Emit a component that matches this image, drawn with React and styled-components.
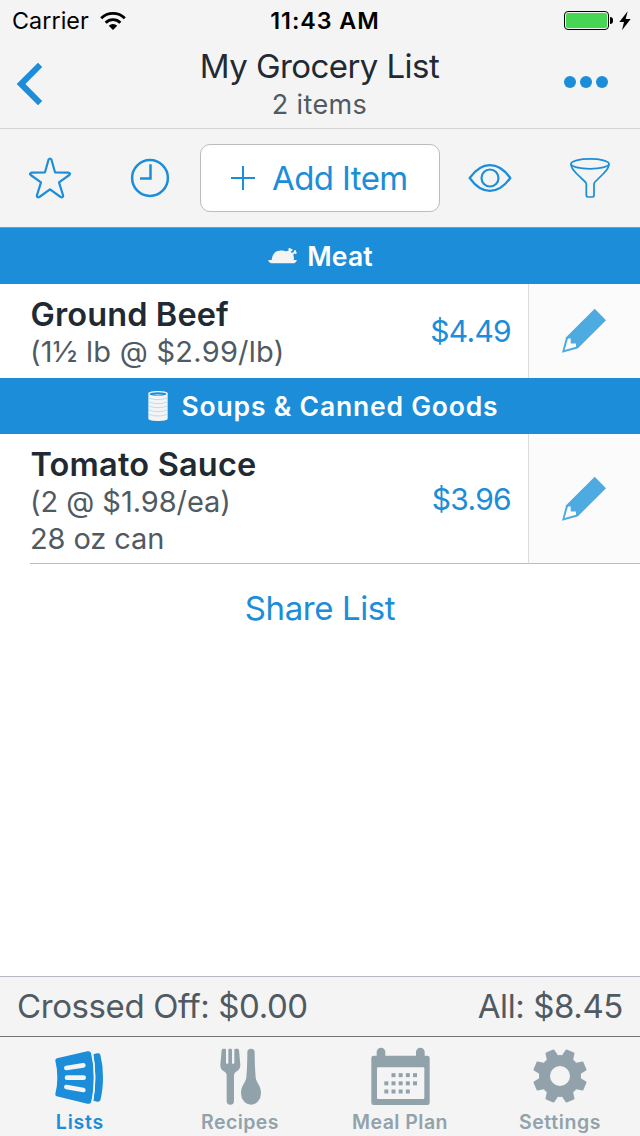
import React from "react"
import styled, { createGlobalStyle } from "styled-components"

const blue = "#1b8dd9"
const dark = "#1f2a33"
const grey = "#505a62"
const tabGrey = "#92a2ab"
const barBg = "#f4f4f4"

const sections = [
	{
		name: "Meat",
		icon: "meat",
		spacing: 0.14,
		items: [
			{
				name: "Ground Beef",
				nameSpacing: 0.11,
				details: [{ text: "(1½ lb @ $2.99/lb)", spacing: 0.25 }],
				price: "$4.49",
			},
		],
	},
	{
		name: "Soups & Canned Goods",
		icon: "can",
		spacing: 0.8,
		items: [
			{
				name: "Tomato Sauce",
				nameSpacing: 0.2,
				details: [
					{ text: "(2 @ $1.98/ea)", spacing: -0.05 },
					{ text: "28 oz can", spacing: -0.1 },
				],
				price: "$3.96",
			},
		],
	},
]

const WifiIcon = () => (
	<svg width="26" height="20" viewBox="299 30 78 60">
		<g fill="none" stroke="#000" strokeWidth="8.5">
			<path d="M302.6 51.6A50 50 0 0 1 373.4 51.6" />
			<path d="M316 65A31 31 0 0 1 360 65" />
		</g>
		<path d="M325.3 74.3A18 18 0 0 1 350.7 74.3L338 87Z" />
	</svg>
)

const BoltIcon = () => (
	<svg width="12" height="20" viewBox="895 30 36 60">
		<path d="M921 31L896 63H910L904 88L930 54H915Z" />
	</svg>
)

const BackIcon = () => (
	<svg width="28" height="44" viewBox="0 0 28 44">
		<path d="M0.7 22L22 0.7L26.2 5L9.4 22L26.2 39L22 43.3Z" fill={blue} />
	</svg>
)

const StarIcon = () => (
	<svg width="44" height="44" viewBox="84 78 132 132">
		<path
			d="M145.500 89Q150 82 154.500 89L165 127L206 128Q213 130 208 135L177 157L189.500 197Q189 204 182 201L150 178L118 201Q111 204 110.500 197L123 157L92 135Q87 130 94 128L135 127Z"
			fill="none"
			stroke={blue}
			strokeWidth="6.500"
			strokeLinejoin="round"
		/>
	</svg>
)

const ClockIcon = () => (
	<svg width="40" height="40" viewBox="0 0 40 40">
		<g fill="none" stroke={blue} strokeWidth="2.500">
			<circle cx="20" cy="20" r="17.900" />
			<path d="M20.500 6.200V20.500H10" />
		</g>
	</svg>
)

const PlusIcon = () => (
	<svg width="24" height="24" viewBox="0 0 24 24">
		<path d="M12 0V24M0 12H24" stroke={blue} strokeWidth="2" />
	</svg>
)

const EyeIcon = () => (
	<svg width="44" height="30" viewBox="444 99 132 90">
		<g fill="none" stroke={blue} strokeWidth="6.500" strokeLinejoin="round">
			<path d="M449 144C469 116 490 105.500 510 105.500S551 116 571 144C551 172 530 182.500 510 182.500S469 172 449 144Z" />
			<circle cx="510" cy="144" r="25.500" />
		</g>
	</svg>
)

const FunnelIcon = () => (
	<svg width="42" height="42" viewBox="747 81 126 126">
		<g fill="none" stroke={blue} strokeWidth="5.200">
			<ellipse cx="810" cy="101.500" rx="57" ry="15" />
			<path d="M753 102C753 115 761 122 771 132L796 156Q799 159 799 163V196Q799 201 804 201H817Q822 201 822 196V163Q822 159 825 156L849 132C859 122 867 115 867 102" />
		</g>
	</svg>
)

const MeatIcon = () => (
	<svg width="30" height="18" viewBox="803 351 90 54">
		<path
			d="M803 391Q808 389 814 390C816 372 825 362 838 362C848 361 856 366 861 363L866 361Q862 356 866 354Q870 353 872 357Q877 356 877 360Q876 364 871 364L874 369L880 366Q880 360 885 360Q888 361 887 365Q891 367 888 371Q884 373 881 370L879 376Q882 384 880 390H890Q887 398 882 400H812Q806 399 803 391Z"
			fill="#f4f4f4"
		/>
	</svg>
)

const CanIcon = () => (
	<svg width="30" height="30" viewBox="430 321 90 90">
		<path
			d="M446 328C446 319 504 319 504 328V404C504 413 446 413 446 404Z"
			fill="#f4f4f4"
		/>
		<ellipse cx="475" cy="330" rx="25" ry="5.500" fill={blue} />
		<path d="M459 333Q475 327 491 333Q475 338 459 333Z" fill="#8cc5ea" />
		<g fill="none" stroke="#a5d0ec" strokeWidth="2">
			<path d="M447 342Q475 352 503 342" />
			<path d="M447 354Q475 364 503 354" />
			<path d="M447 366Q475 376 503 366" />
			<path d="M447 378Q475 388 503 378" />
			<path d="M447 391Q475 401 503 391" />
		</g>
	</svg>
)

const PencilIcon = () => (
	<svg width="46" height="46" viewBox="0 0 46 46">
		<path
			d="M32.700 0.800L44 12.200L15.700 40.500L0 44.800L4.100 29.300Z"
			fill="#4dabe1"
		/>
		<path d="M6 30.500H8.700V35.500H14V38.800L2.600 42Z" fill="#fbfbfb" />
	</svg>
)

const ListsIcon = () => (
	<svg width="50" height="60" viewBox="165 231 150 180">
		<g fill={blue}>
			<path d="M166 272Q165 267 171 265L262 244Q271 242 273 249Q282 285 281 323Q281 365 273 397Q271 403 262 401L170 379Q165 378 166 372Q172 350 172 323Q172 295 166 272Z" />
			<path d="M280 253L292 250Q299 249 301 254Q309 285 309 322Q309 360 301 391Q299 396 292 395L280 392Q286 360 286 322Q286 285 280 253Z" />
		</g>
		<path
			d="M277 247Q284 285 284 322Q284 362 277 398"
			fill="none"
			stroke={barBg}
			strokeWidth="4"
		/>
		<path
			d="M199 294L250 286M201 323H251M199 351L250 360"
			stroke={barBg}
			strokeWidth="14"
			strokeLinecap="round"
		/>
	</svg>
)

const RecipesIcon = () => (
	<svg width="44" height="60" viewBox="654 231 132 180">
		<g fill={tabGrey}>
			<path d="M665 240Q666 236 670 236H675Q678 236 678 240V278A3.500 3.500 0 0 0 685 278V240Q685 236 688 236H693Q696 236 696 240V278A3.500 3.500 0 0 0 703 278V240Q703 236 706 236H712Q716 236 717 240L721 284C721 297 714 302 708 305Q702 308 702 316V393A11 11 0 0 1 680 393V316Q680 308 674 305C667 302 661 297 661 284Z" />
			<path d="M742 247A11 11 0 0 1 764 247C764 270 765 300 767 322C768 338 783 345 783 370A30 34 0 0 1 723 370C723 345 738 338 739 322C741 300 742 270 742 247Z" />
		</g>
	</svg>
)

const calendarDots = [
	[1, 2, 3, 4],
	[0, 1, 2, 3, 4],
	[0, 1, 2, 3],
]

const CalendarIcon = () => (
	<svg width="60" height="60" viewBox="151 231 180 180">
		<g fill={tabGrey}>
			<rect x="171" y="233" width="26" height="40" rx="13" />
			<rect x="289" y="233" width="26" height="40" rx="13" />
			<rect x="155" y="257" width="175" height="148" rx="7" />
		</g>
		<rect x="172" y="292" width="142" height="95" rx="3" fill={barBg} />
		{calendarDots.map((cols, row) =>
			cols.map((col) => (
				<rect
					key={`${row}-${col}`}
					x={194 + col * 21.5}
					y={309.5 + row * 24.5}
					width="12"
					height="12"
					fill={tabGrey}
				/>
			))
		)}
	</svg>
)

const GearIcon = () => (
	<svg width="60" height="60" viewBox="630 231 180 180">
		<g fill={tabGrey} stroke={tabGrey} strokeLinejoin="round">
			{[22.5, 67.5, 112.5, 157.5, 202.5, 247.5, 292.5, 337.5].map((a) => (
				<path
					key={a}
					d="M704 265L708.5 240H731.5L736 265Z"
					strokeWidth="6"
					transform={`rotate(${a} 720 318)`}
				/>
			))}
			<circle cx="720" cy="318" r="46.500" fill="none" strokeWidth="33" />
		</g>
	</svg>
)

const tabs = [
	{ label: "Lists", icon: <ListsIcon />, spacing: 0.8, active: true },
	{ label: "Recipes", icon: <RecipesIcon />, spacing: 0.45 },
	{ label: "Meal Plan", icon: <CalendarIcon />, spacing: 0.48 },
	{ label: "Settings", icon: <GearIcon />, spacing: 0.6 },
]

const ListItem = ({ item, last }) => (
	<Item>
		<ItemBody $last={last}>
			<ItemText $last={last}>
				<ItemName $spacing={item.nameSpacing}>{item.name}</ItemName>
				{item.details.map((d) => (
					<ItemDetail key={d.text} $spacing={d.spacing}>
						{d.text}
					</ItemDetail>
				))}
			</ItemText>
			<Price>{item.price}</Price>
		</ItemBody>
		<EditButton $last={last} aria-label={`Edit ${item.name}`}>
			<PencilIcon />
		</EditButton>
	</Item>
)

export default function App() {
	return (
		<>
			<GlobalStyle />
			<Screen>
				<StatusBar>
					<Carrier>
						Carrier
						<WifiIcon />
					</Carrier>
					<Time>11:43 AM</Time>
					<Battery>
						<BatteryCase>
							<BatteryLevel />
						</BatteryCase>
						<BatteryTip />
						<BoltIcon />
					</Battery>
				</StatusBar>
				<NavBar>
					<BackButton aria-label="Back">
						<BackIcon />
					</BackButton>
					<Heading>
						<Title>My Grocery List</Title>
						<Subtitle>2 items</Subtitle>
					</Heading>
					<MoreButton aria-label="More">
						<Dot />
						<Dot />
						<Dot />
					</MoreButton>
				</NavBar>
				<Toolbar>
					<ToolButton aria-label="Favorites">
						<StarIcon />
					</ToolButton>
					<ToolButton aria-label="Recent">
						<ClockIcon />
					</ToolButton>
					<AddButton>
						<PlusIcon />
						Add Item
					</AddButton>
					<ToolButton aria-label="Show">
						<EyeIcon />
					</ToolButton>
					<ToolButton aria-label="Filter">
						<FunnelIcon />
					</ToolButton>
				</Toolbar>
				<List>
					{sections.map((section, i) => (
						<React.Fragment key={section.name}>
							<SectionHeader $spacing={section.spacing}>
								{section.icon === "meat" ? <MeatIcon /> : <CanIcon />}
								{section.name}
							</SectionHeader>
							{section.items.map((item) => (
								<ListItem
									key={item.name}
									item={item}
									last={i === sections.length - 1}
								/>
							))}
						</React.Fragment>
					))}
					<ShareButton>Share List</ShareButton>
				</List>
				<Totals>
					<Total>Crossed Off: $0.00</Total>
					<Total>All: $8.45</Total>
				</Totals>
				<TabBar>
					{tabs.map((tab) => (
						<Tab key={tab.label} $active={tab.active} $spacing={tab.spacing}>
							{tab.icon}
							<TabLabel>{tab.label}</TabLabel>
						</Tab>
					))}
				</TabBar>
			</Screen>
		</>
	)
}

const GlobalStyle = createGlobalStyle`
	* {
		box-sizing: border-box;
	}
	body {
		margin: 0;
		font-family: Inter, "Liberation Sans", sans-serif;
	}
	button {
		padding: 0;
		border: 0;
		background: none;
		font: inherit;
	}
	svg {
		display: block;
		flex: none;
	}
`
const Screen = styled.div`
	display: flex;
	flex-direction: column;
	width: 640px;
	height: 1136px;
	background: #fff;
	color: ${dark};
	overflow: hidden;
`
const StatusBar = styled.div`
	display: grid;
	grid-template-columns: 200px 1fr 200px;
	align-items: center;
	flex: none;
	height: 40px;
	padding: 1px 9px 0 12px;
	background: ${barBg};
	color: #000;
	font-size: 23.3px;
`
const Carrier = styled.div`
	display: flex;
	align-items: center;
	gap: 11px;
	letter-spacing: 0.07px;
`
const Time = styled.div`
	padding-left: 7px;
	text-align: center;
	font-weight: 600;
	letter-spacing: 0.95px;
`
const Battery = styled.div`
	display: flex;
	align-items: center;
	justify-content: flex-end;
`
const BatteryCase = styled.div`
	width: 45px;
	height: 19px;
	padding: 1px;
	border: 1px solid #000;
	border-radius: 4px;
`
const BatteryLevel = styled.div`
	height: 100%;
	border-radius: 2px;
	background: #46d654;
`
const BatteryTip = styled.div`
	width: 3px;
	height: 7px;
	margin: 0 6px 0 1px;
	border-radius: 0 3px 3px 0;
	background: #000;
`
const NavBar = styled.header`
	display: grid;
	grid-template-columns: 100px 1fr 100px;
	flex: none;
	height: 89px;
	border-bottom: 1px solid #d5d5d5;
	background: ${barBg};
`
const BackButton = styled.button`
	display: flex;
	align-items: center;
	padding-left: 16px;
`
const Heading = styled.div`
	padding: 6px 1px 0 0;
	text-align: center;
`
const Title = styled.h1`
	margin: 0;
	font-size: 33px;
	font-weight: 400;
	line-height: 40px;
	letter-spacing: -0.57px;
`
const Subtitle = styled.p`
	margin: 0;
	color: ${grey};
	font-size: 27px;
	line-height: 38px;
	letter-spacing: 0.35px;
`
const MoreButton = styled.button`
	display: flex;
	align-items: center;
	justify-content: flex-end;
	gap: 4px;
	padding: 0 32px 4px 0;
`
const Dot = styled.span`
	width: 12px;
	height: 12px;
	border-radius: 50%;
	background: ${blue};
`
const Toolbar = styled.div`
	display: grid;
	grid-template-columns: 100px 100px 240px 100px 100px;
	align-items: center;
	flex: none;
	height: 99px;
	border-bottom: 1px solid #8797a2;
	background: ${barBg};
`
const ToolButton = styled.button`
	display: flex;
	align-items: center;
	justify-content: center;
`
const AddButton = styled.button`
	display: flex;
	align-items: center;
	gap: 17px;
	height: 68px;
	padding-left: 30px;
	border: 1px solid #bcbcbc;
	border-radius: 10px;
	background: #fff;
	color: ${blue};
	font-size: 33px;
	letter-spacing: -0.6px;
`
const List = styled.main`
	flex: 1;
`
const SectionHeader = styled.h2`
	display: flex;
	align-items: center;
	justify-content: center;
	gap: 9px;
	height: 56px;
	margin: 0;
	padding-left: 1px;
	background: ${blue};
	color: #fff;
	font-size: 26.5px;
	font-weight: 600;
	letter-spacing: ${(props) => props.$spacing}px;
`
const Item = styled.div`
	display: flex;
	padding-left: 30px;
`
const ItemBody = styled.div`
	display: flex;
	flex: 1;
	align-items: center;
	justify-content: space-between;
	padding-right: 17px;
	border-bottom: ${(props) => (props.$last ? "1px solid #bcbcbc" : "0")};
`
const ItemText = styled.div`
	padding: 12px 0 ${(props) => (props.$last ? 6 : 8)}px;
`
const ItemName = styled.h3`
	margin: 0;
	padding-left: 0.5px;
	font-size: 32.5px;
	font-weight: 600;
	line-height: 37px;
	letter-spacing: ${(props) => props.$spacing}px;
`
const ItemDetail = styled.p`
	margin: 0;
	color: ${grey};
	font-size: 29px;
	line-height: 37px;
	letter-spacing: ${(props) => props.$spacing}px;
`
const Price = styled.span`
	color: ${blue};
	font-size: 30px;
	letter-spacing: -0.7px;
`
const EditButton = styled.button`
	display: flex;
	align-items: center;
	width: 112px;
	padding-left: 33px;
	border-left: 1px solid #dcdcdc;
	border-bottom: ${(props) => (props.$last ? "1px solid #bcbcbc" : "0")};
	background: #fbfbfb;
`
const ShareButton = styled.button`
	display: block;
	margin: 24px auto 0;
	color: ${blue};
	font-size: 33px;
	line-height: 40px;
	letter-spacing: -0.41px;
`
const Totals = styled.div`
	display: flex;
	align-items: center;
	justify-content: space-between;
	flex: none;
	height: 60px;
	padding: 0 17px 1px;
	border-top: 1px solid #b6b9c1;
	background: ${barBg};
`
const Total = styled.span`
	color: ${grey};
	font-size: 33px;
	letter-spacing: -0.4px;
`
const TabBar = styled.nav`
	display: grid;
	grid-template-columns: repeat(4, 1fr);
	flex: none;
	height: 100px;
	border-top: 1px solid #737373;
	background: ${barBg};
`
const Tab = styled.button`
	display: flex;
	flex-direction: column;
	align-items: center;
	padding-top: 10px;
	color: ${(props) => (props.$active ? blue : tabGrey)};
	letter-spacing: ${(props) => props.$spacing}px;
`
const TabLabel = styled.span`
	font-size: 19.5px;
	font-weight: 600;
	line-height: 30px;
`
